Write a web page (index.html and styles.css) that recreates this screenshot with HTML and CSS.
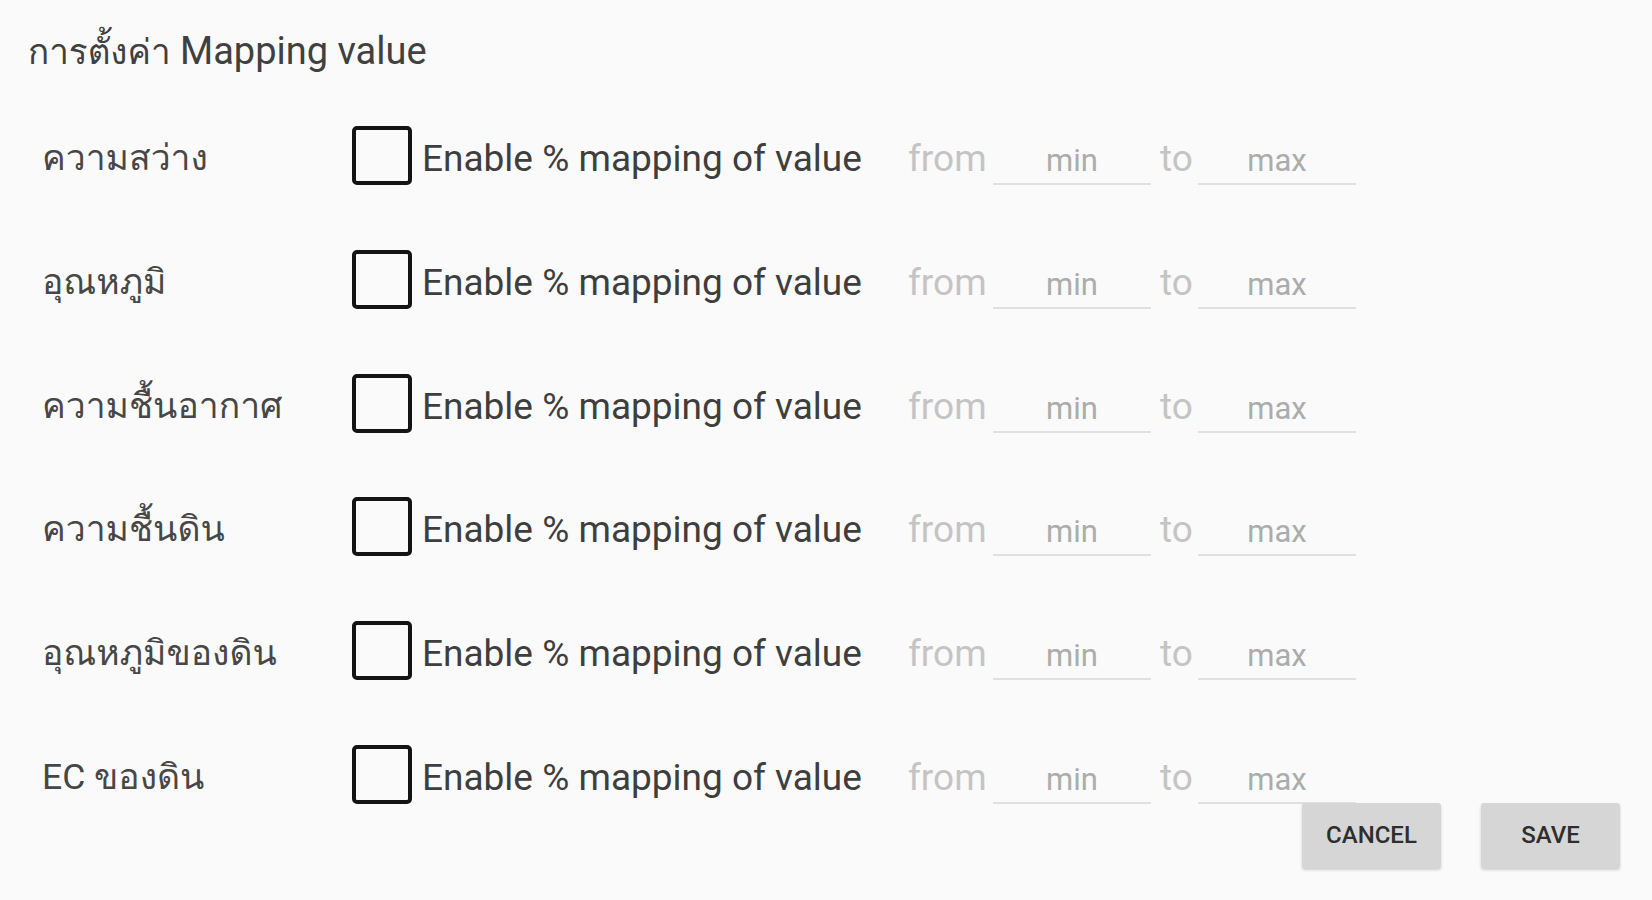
FILE: index.html
```html
<!DOCTYPE html>
<html lang="th">
<head>
<meta charset="utf-8">
<title>Mapping value</title>
<link rel="stylesheet" href="styles.css">
</head>
<body>
<div class="dialog">
  <h1 class="title"><span class="title-th">การตั้งค่า</span> Mapping value</h1>
  <div class="rows">
    <div class="row">
      <div class="label">ความสว่าง</div>
      <div class="check"></div>
      <div class="line">
        <span class="enable">Enable % mapping of value</span>
        <span class="word from">from</span>
        <span class="field">min</span>
        <span class="word to">to</span>
        <span class="field">max</span>
      </div>
    </div>
    <div class="row">
      <div class="label">อุณหภูมิ</div>
      <div class="check"></div>
      <div class="line">
        <span class="enable">Enable % mapping of value</span>
        <span class="word from">from</span>
        <span class="field">min</span>
        <span class="word to">to</span>
        <span class="field">max</span>
      </div>
    </div>
    <div class="row">
      <div class="label">ความชื้นอากาศ</div>
      <div class="check"></div>
      <div class="line">
        <span class="enable">Enable % mapping of value</span>
        <span class="word from">from</span>
        <span class="field">min</span>
        <span class="word to">to</span>
        <span class="field">max</span>
      </div>
    </div>
    <div class="row">
      <div class="label">ความชื้นดิน</div>
      <div class="check"></div>
      <div class="line">
        <span class="enable">Enable % mapping of value</span>
        <span class="word from">from</span>
        <span class="field">min</span>
        <span class="word to">to</span>
        <span class="field">max</span>
      </div>
    </div>
    <div class="row">
      <div class="label">อุณหภูมิของดิน</div>
      <div class="check"></div>
      <div class="line">
        <span class="enable">Enable % mapping of value</span>
        <span class="word from">from</span>
        <span class="field">min</span>
        <span class="word to">to</span>
        <span class="field">max</span>
      </div>
    </div>
    <div class="row">
      <div class="label">EC ของดิน</div>
      <div class="check"></div>
      <div class="line">
        <span class="enable">Enable % mapping of value</span>
        <span class="word from">from</span>
        <span class="field">min</span>
        <span class="word to">to</span>
        <span class="field">max</span>
      </div>
    </div>
  </div>
  <div class="actions">
    <button class="btn">CANCEL</button>
    <button class="btn">SAVE</button>
  </div>
</div>
</body>
</html>
```
FILE: styles.css
```css
html, body {
  margin: 0;
  padding: 0;
  background: #fafafa;
}
body {
  font-family: Roboto, "Loma", "Noto Sans Thai", "Noto Sans", "DejaVu Sans", sans-serif;
  width: 1652px;
  height: 900px;
  overflow: hidden;
}
.dialog {
  padding: 30px 32px 0 28px;
  display: flex;
  flex-direction: column;
}
.title {
  margin: 0;
  font-size: 38px;
  font-weight: 400;
  line-height: 42px;
  color: #404040;
  height: 42px;
  white-space: nowrap;
}
.title-th {
  font-size: 35px;
}
.rows {
  margin-top: 52px;
  padding-left: 14px;
  display: flex;
  flex-direction: column;
  gap: 63.8px;
}
.row {
  height: 60px;
  display: flex;
  align-items: flex-start;
}
.label {
  width: 310px;
  flex: none;
  font-size: 35.5px;
  line-height: 44px;
  margin-top: 12px;
  color: #474747;
  white-space: nowrap;
}
.check {
  flex: none;
  width: 52px;
  height: 51px;
  margin-top: 2px;
  border: 4px solid #141414;
  border-radius: 5px;
}
.line {
  display: flex;
  align-items: baseline;
  margin-left: 10px;
  margin-top: 13px;
}
.enable {
  width: 486px;
  flex: none;
  font-size: 37px;
  line-height: 44px;
  color: #3e3e3e;
  white-space: nowrap;
}
.word {
  flex: none;
  font-size: 37px;
  line-height: 44px;
  color: #c4c4c4;
}
.from {
  width: 85px;
}
.to {
  width: 38px;
  margin-left: 9px;
}
.field {
  flex: none;
  width: 158px;
  font-size: 31px;
  line-height: 36px;
  padding-bottom: 4px;
  border-bottom: 2px solid #e0e0e0;
  text-align: center;
  color: #acacac;
}
.actions {
  margin-top: 0;
  display: flex;
  justify-content: flex-end;
  gap: 40px;
}
.btn {
  width: 139px;
  height: 65px;
  border: none;
  border-radius: 3px;
  background: #d6d6d6;
  box-shadow: 0 2px 3px rgba(0, 0, 0, 0.18);
  font-family: Roboto, sans-serif;
  font-size: 24px;
  font-weight: 500;
  color: #2e2e2e;
  padding: 0;
}
```
